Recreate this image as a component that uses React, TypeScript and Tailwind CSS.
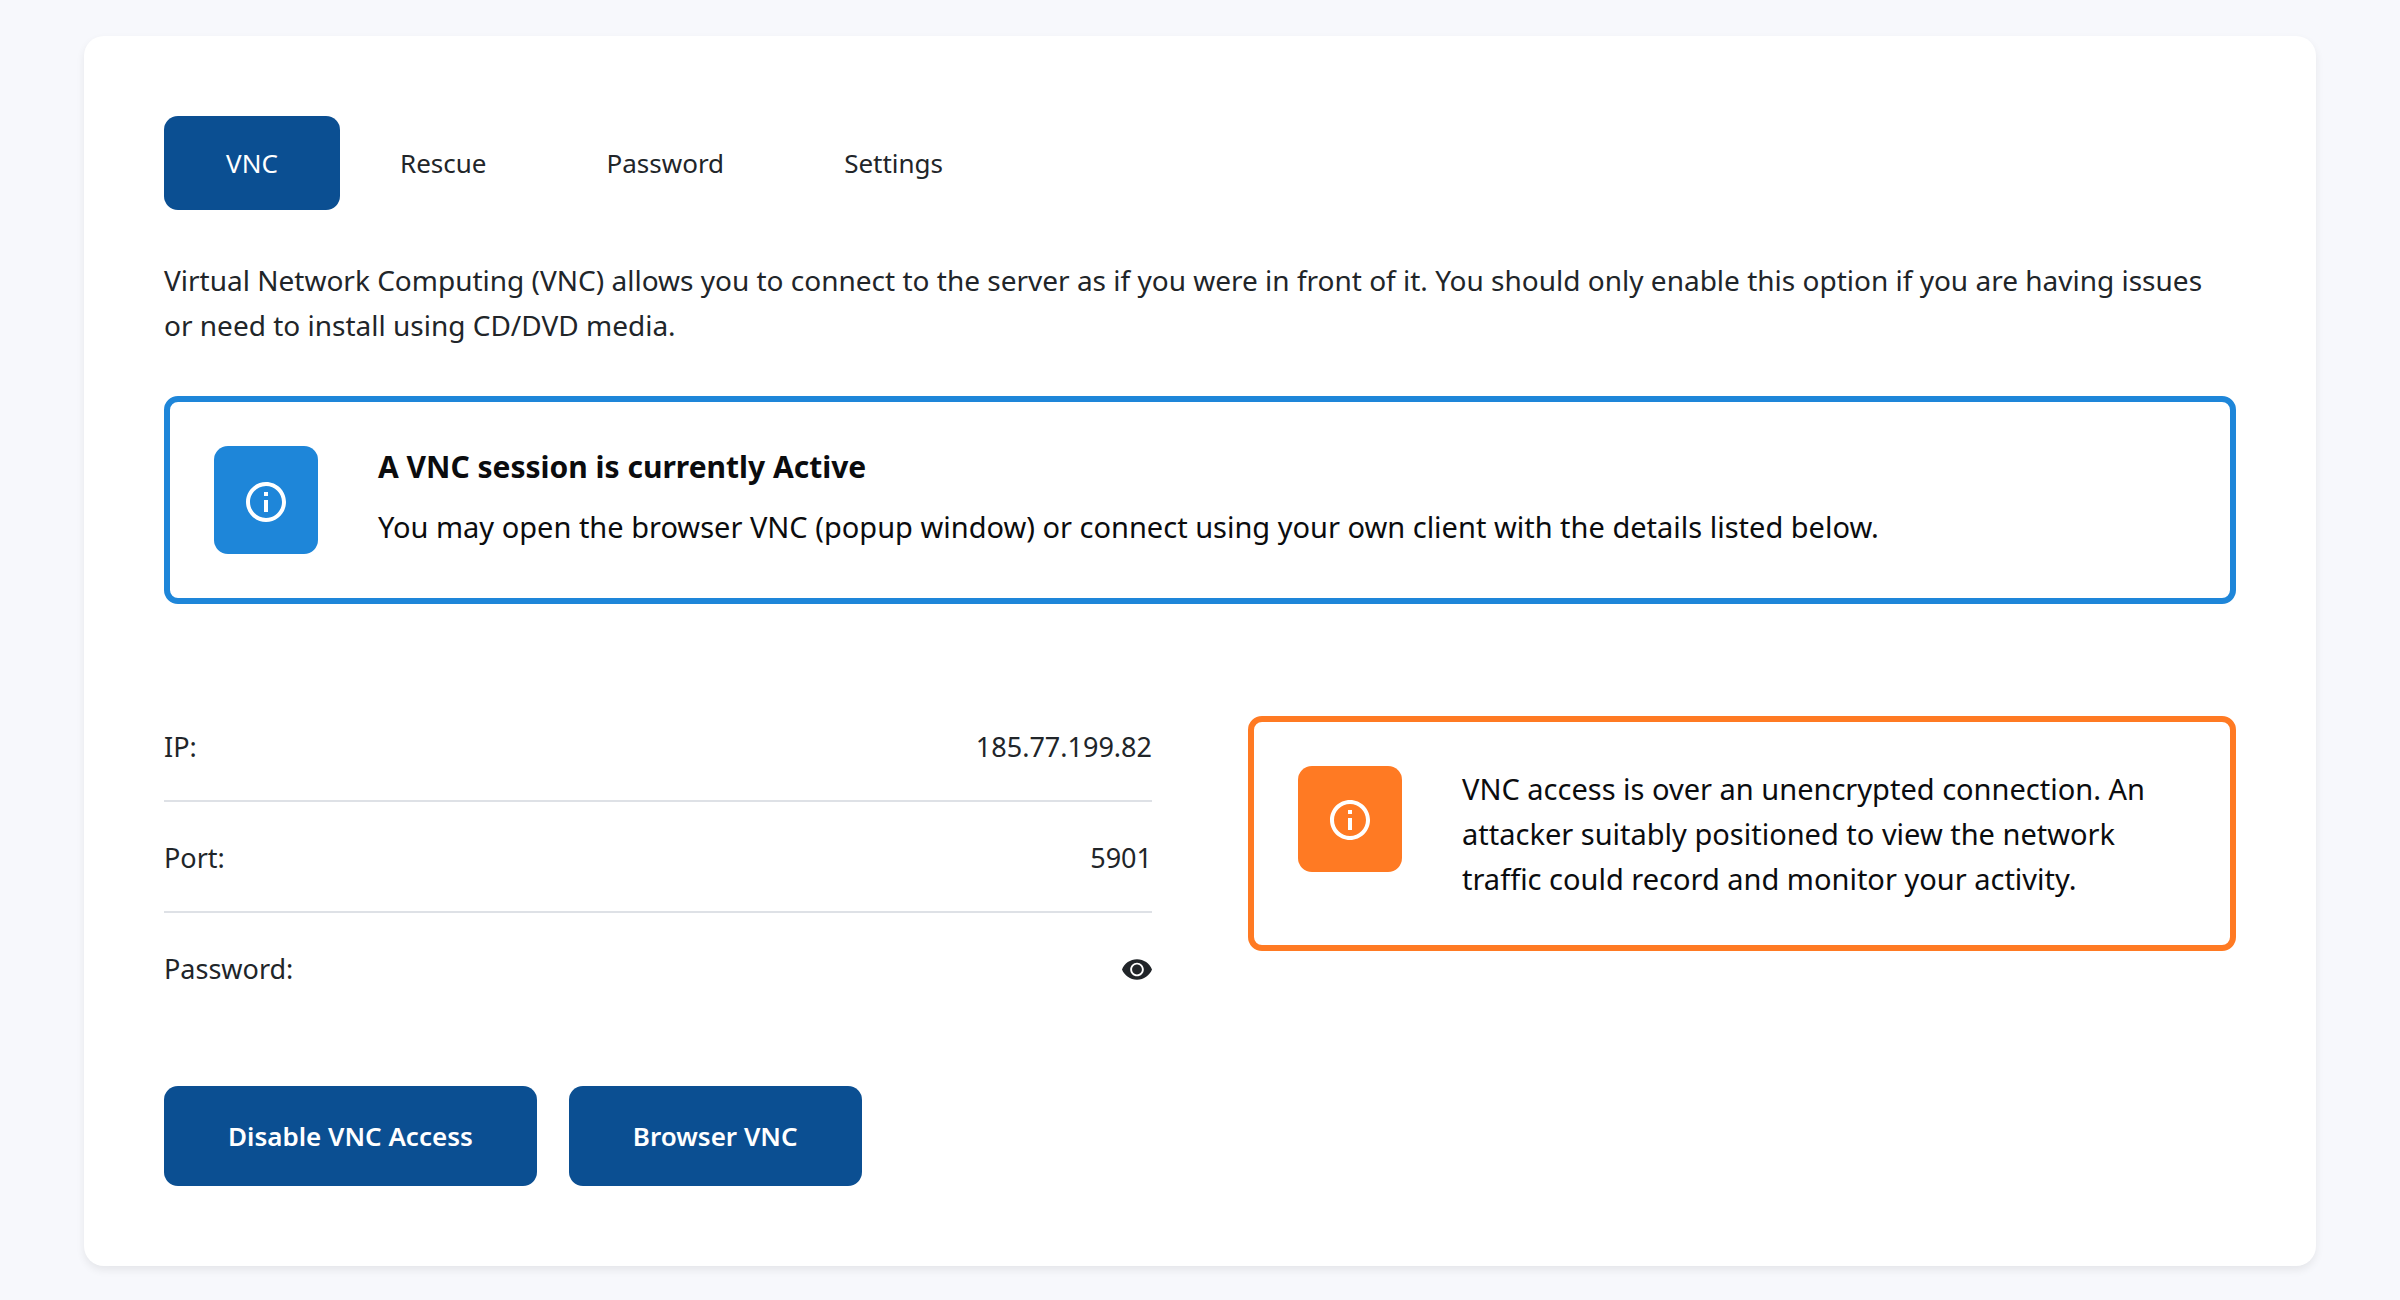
import React, { useState } from 'react';
import type { ReactNode } from 'react';
import { MdInfoOutline } from 'react-icons/md';

const tabs = ['VNC', 'Rescue', 'Password', 'Settings'];

function Callout({ tone, children }: { tone: 'info' | 'warning'; children: ReactNode }) {
  const info = tone === 'info';
  return (
    <section
      className={`flex items-start gap-[60px] rounded-[14px] border-6 p-11 text-[#0b0c0e] ${
        info ? 'border-[#1e86d9]' : 'border-[#ff7a23]'
      }`}
    >
      <span
        className={`flex shrink-0 rounded-[14px] px-7 pb-7 text-white ${
          info ? 'bg-[#1e86d9] pt-8' : 'bg-[#ff7a23] pt-[30px]'
        }`}
      >
        <MdInfoOutline className="size-12" aria-hidden="true" />
      </span>
      <div className="min-w-0 text-[29px] leading-[45px]">{children}</div>
    </section>
  );
}

function Row({ label, children, last = false }: { label: string; children: ReactNode; last?: boolean }) {
  return (
    <div
      className={`flex items-center justify-between pt-[35px] pb-8 text-[27px] leading-[42px] ${
        last ? '' : 'border-b-2 border-[#dee1e6]'
      }`}
    >
      <dt>{label}</dt>
      <dd>{children}</dd>
    </div>
  );
}

export default function App() {
  const [active, setActive] = useState('VNC');

  return (
    <div className="min-h-screen bg-[#f7f8fc] px-21 pt-9 pb-8 font-['Noto_Sans','Open_Sans',sans-serif] text-[#212529]">
      <main className="rounded-[20px] bg-white p-20 shadow-[0_4px_8px_rgba(0,0,0,0.075)]">
        <nav className="flex" role="tablist">
          {tabs.map((tab) => (
            <button
              key={tab}
              type="button"
              role="tab"
              aria-selected={tab === active}
              onClick={() => setActive(tab)}
              className={`min-w-44 rounded-[14px] px-[60px] py-[27px] text-[26px] leading-10 ${
                tab === active ? 'bg-[#0b4f92] text-white' : ''
              }`}
            >
              {tab}
            </button>
          ))}
        </nav>

        <p className="mt-12 mb-12 text-[28px] leading-[45px]">
          Virtual Network Computing (VNC) allows you to connect to the server as if you were in front of it. You should
          only enable this option if you are having issues or need to install using CD/DVD media.
        </p>

        <Callout tone="info">
          <h2 className="mb-4 text-[30px] leading-[42px] font-bold">A VNC session is currently Active</h2>
          <p>
            You may open the browser VNC (popup window) or connect using your own client with the details listed below.
          </p>
        </Callout>

        <div className="mt-[87px] grid grid-cols-2 items-start gap-24">
          <dl>
            <Row label="IP:">185.77.199.82</Row>
            <Row label="Port:">5901</Row>
            <Row label="Password:" last>
              <button type="button" aria-label="Show password" className="block">
                <svg viewBox="1 4.5 22 15" className="h-[21px] w-[30px]" fill="currentColor" aria-hidden="true">
                  <path d="M12 4.5C7 4.5 2.73 7.61 1 12c1.73 4.39 6 7.5 11 7.5s9.27-3.11 11-7.5c-1.73-4.39-6-7.5-11-7.5zM12 17c-2.76 0-5-2.24-5-5s2.24-5 5-5 5 2.24 5 5-2.24 5-5 5zm0-8.6c-1.99 0-3.600 1.610-3.600 3.600s1.610 3.600 3.600 3.600 3.600-1.610 3.600-3.600-1.610-3.600-3.600-3.600z" />
                </svg>
              </button>
            </Row>
          </dl>
          <div className="mt-[25px]">
            <Callout tone="warning">
              <p>
                VNC access is over an unencrypted connection. An attacker suitably positioned to view the network
                traffic could record and monitor your activity.
              </p>
            </Callout>
          </div>
        </div>

        <div className="mt-16 flex gap-8">
          {['Disable VNC Access', 'Browser VNC'].map((label) => (
            <button
              key={label}
              type="button"
              className="rounded-[14px] bg-[#0b4f92] px-16 py-[30px] text-[26px] leading-10 font-semibold text-white"
            >
              {label}
            </button>
          ))}
        </div>
      </main>
    </div>
  );
}
